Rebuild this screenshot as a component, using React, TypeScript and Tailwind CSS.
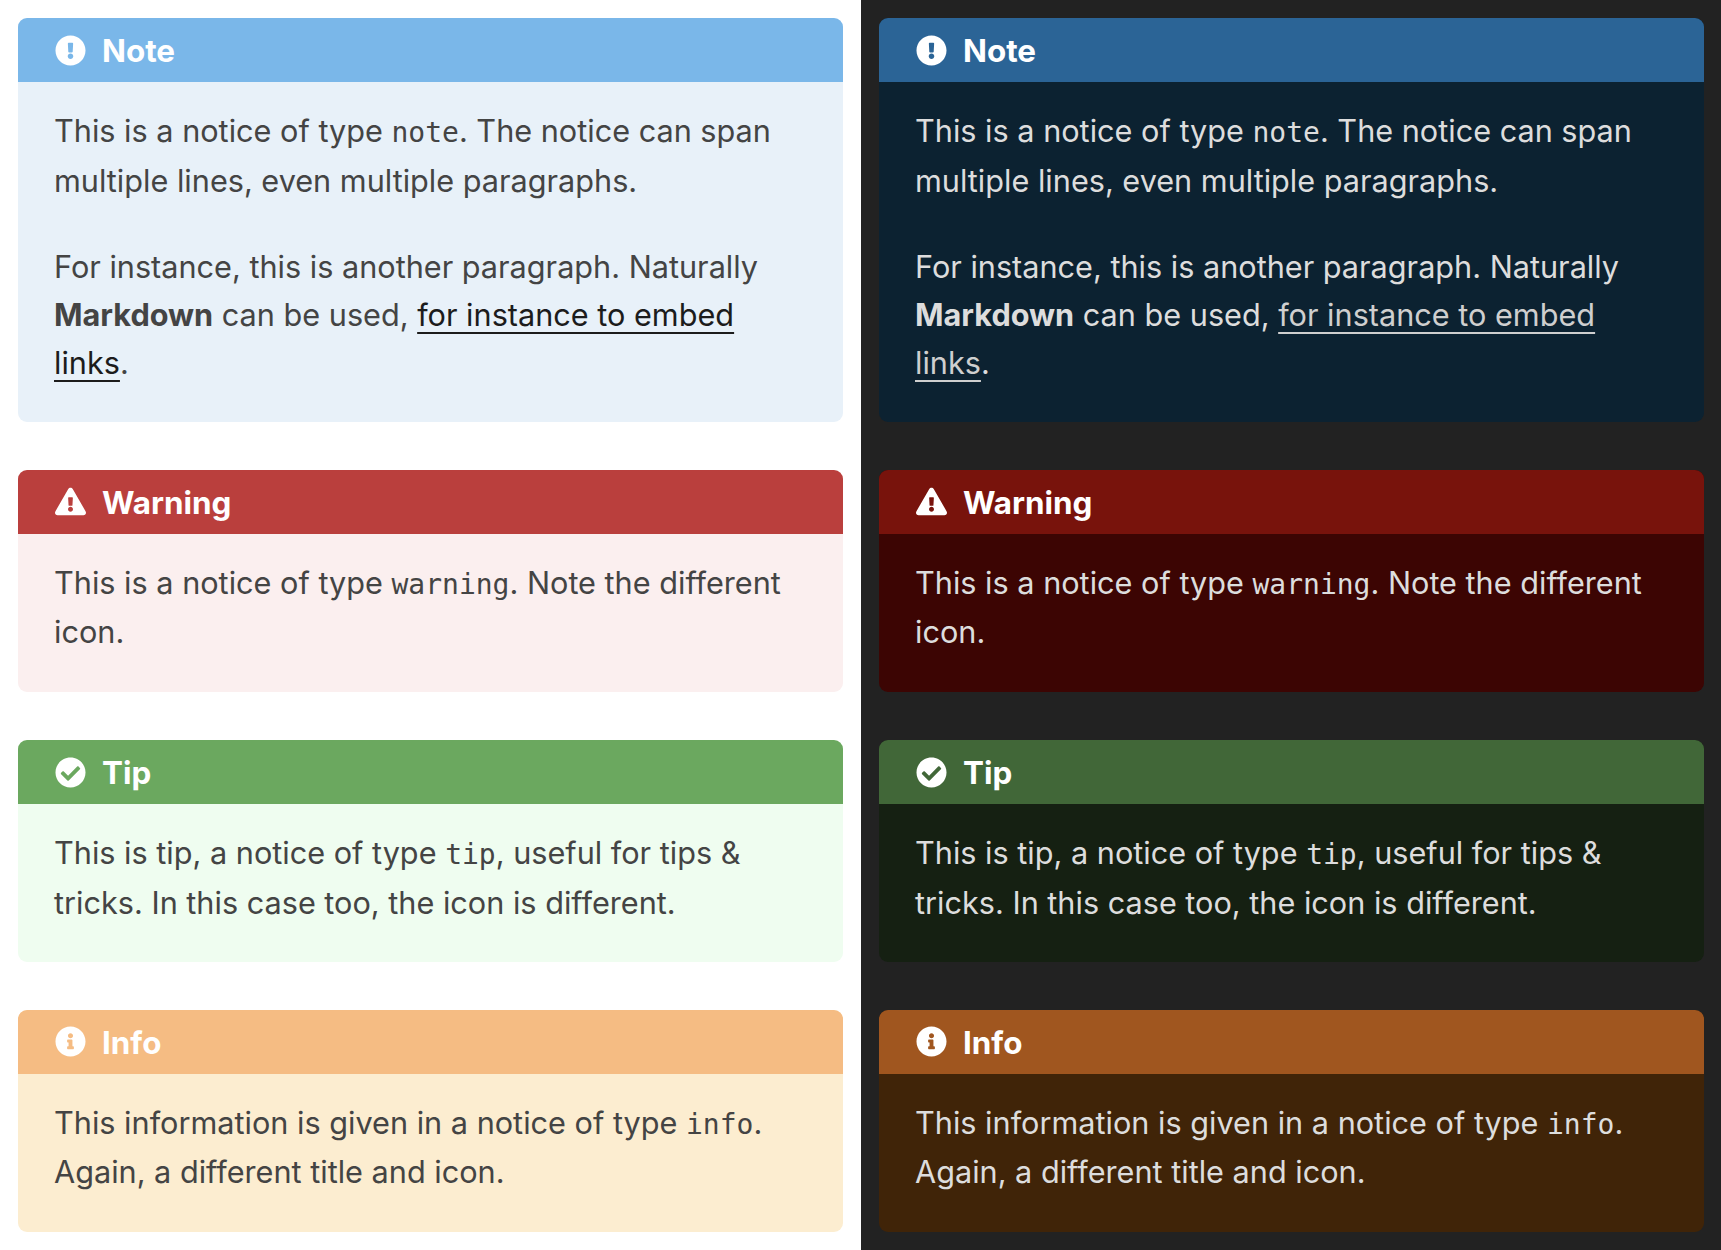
import React from "react";
import { FaExclamationCircle, FaExclamationTriangle, FaCheckCircle, FaInfoCircle } from "react-icons/fa";

const Code = ({ children }: { children: React.ReactNode }) => (
  <code className="font-['DejaVu_Sans_Mono',monospace] text-[28px] leading-[47.5px]">{children}</code>
);

type Tone = { head: string; body: string };

function Notice({ title, icon, tone, pad, children }: { title: string; icon: React.ReactNode; tone: Tone; pad: string; children: React.ReactNode }) {
  return (
    <div className={`rounded-[9px] overflow-hidden ${tone.body}`}>
      <div className={`h-16 pl-[36.5px] flex items-center gap-[16.5px] text-white font-bold text-[31.4px] ${tone.head}`}>
        <span className="text-[31px] flex">{icon}</span>
        <span className="pt-[2px]">{title}</span>
      </div>
      <div className={`px-[36px] pt-[25px] ${pad}`}>{children}</div>
    </div>
  );
}

function Column({ dark }: { dark: boolean }) {
  const t = dark
    ? {
        note: { head: "bg-[#2b6496]", body: "bg-[#0c2231]" },
        warning: { head: "bg-[#78130c]", body: "bg-[#3c0503]" },
        tip: { head: "bg-[#416738]", body: "bg-[#152012]" },
        info: { head: "bg-[#a0561f]", body: "bg-[#402408]" },
      }
    : {
        note: { head: "bg-[#7ab7e9]", body: "bg-[#e8f1f9]" },
        warning: { head: "bg-[#ba3f3d]", body: "bg-[#fbefef]" },
        tip: { head: "bg-[#6ba85f]", body: "bg-[#effdf0]" },
        info: { head: "bg-[#f5bc83]", body: "bg-[#fcedd0]" },
      };
  const link = dark ? "text-[#cfcfcf] underline decoration-2 underline-offset-[6px]" : "text-[#1c1c1c] underline decoration-2 underline-offset-[6px]";
  return (
    <div className={`pl-[18px] py-[18px] flex flex-col gap-[48px] text-[30.65px] leading-[48.4px] ${dark ? "pr-[17px] bg-[#222222] text-[#dddddd]" : "pr-[18px] bg-white text-[#444444]"}`}>
      <Notice title="Note" icon={<FaExclamationCircle />} tone={t.note} pad="pb-[35px]">
        <p className="mb-[38px]">
          This is a notice of type <Code>note</Code>. The notice can span multiple lines, even multiple paragraphs.
        </p>
        <p className="leading-[48px]">
          For instance, this is another paragraph. Naturally <strong className="font-bold">Markdown</strong> can be used,{" "}
          <a className={link}>for instance to embed links</a>.
        </p>
      </Notice>
      <Notice title="Warning" icon={<FaExclamationTriangle />} tone={t.warning} pad="pb-[35.5px]">
        <p>
          This is a notice of type <Code>warning</Code>. Note the different icon.
        </p>
      </Notice>
      <Notice title="Tip" icon={<FaCheckCircle />} tone={t.tip} pad="pb-[34.5px]">
        <p>
          This is tip, a notice of type <Code>tip</Code>, useful for tips &amp; tricks. In this case too, the icon is different.
        </p>
      </Notice>
      <Notice title="Info" icon={<FaInfoCircle />} tone={t.info} pad="pb-[35.5px]">
        <p>
          This information is given in a notice of type <Code>info</Code>. Again, a different title and icon.
        </p>
      </Notice>
    </div>
  );
}

export default function App() {
  return (
    <div className="grid grid-cols-[861px_860px] w-[1721px] h-[1250px] overflow-hidden font-['Inter',sans-serif]">
      <Column dark={false} />
      <Column dark={true} />
    </div>
  );
}
